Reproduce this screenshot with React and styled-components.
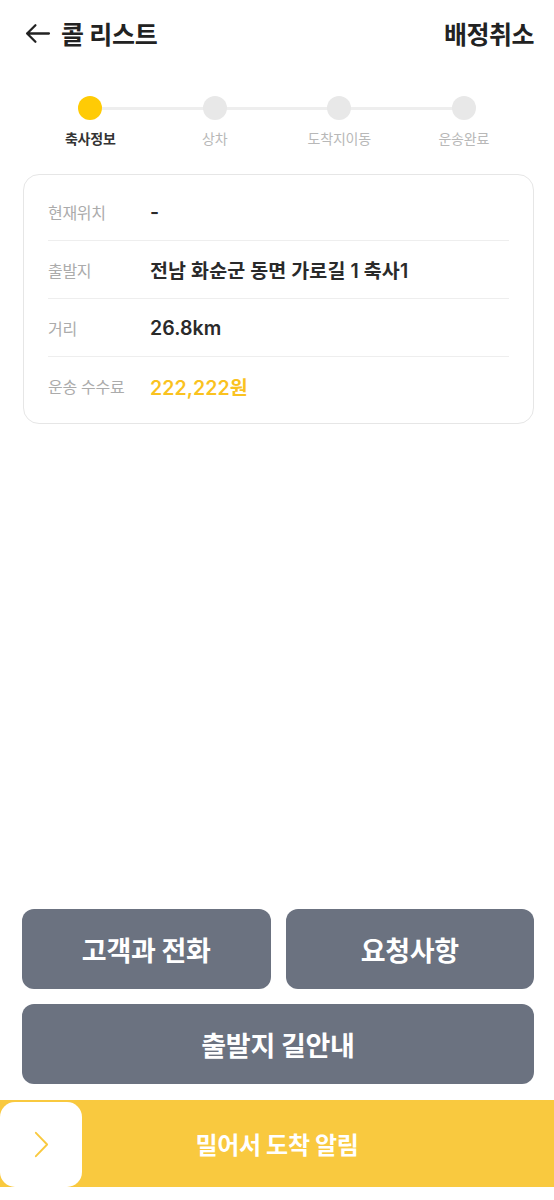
import React from 'react';
import { styled, createGlobalStyle } from 'styled-components';

const colors = {
  text: '#222222',
  value: '#2a2a2a',
  label: '#ababab',
  line: '#eeeeee',
  yellow: '#f9c93f',
  dot: '#ffcb05',
  fee: '#fac21f',
  button: '#6b7280',
};

const steps = ['축사정보', '상차', '도착지이동', '운송완료'];

const infoRows = [
  { label: '현재위치', value: '-' },
  { label: '출발지', value: '전남 화순군 동면 가로길 1 축사1' },
  { label: '거리', value: '26.8km' },
  { label: '운송 수수료', value: '222,222원', highlight: true },
];

const GlobalStyle = createGlobalStyle`
  html, body {
    margin: 0;
    padding: 0;
    background: #ffffff;
  }
  * {
    box-sizing: border-box;
  }
  body {
    font-family: Inter, 'Noto Sans CJK KR', 'Noto Sans', sans-serif;
    color: ${colors.text};
  }
`;

const App = () => {
  return (
    <Page>
      <GlobalStyle />
      <Header>
        <BackTitle>
          <BackArrow viewBox="0 0 26 24">
            <path d="M24 12H3M11 4l-8 8 8 8" />
          </BackArrow>
          <Title>콜 리스트</Title>
        </BackTitle>
        <HeaderAction>배정취소</HeaderAction>
      </Header>

      <Stepper>
        <StepLine />
        {steps.map((step, i) => (
          <Step key={step}>
            <Dot active={i === 0} />
            <StepLabel active={i === 0}>{step}</StepLabel>
          </Step>
        ))}
      </Stepper>

      <InfoCard>
        {infoRows.map((row) => (
          <InfoRow key={row.label}>
            <InfoLabel>{row.label}</InfoLabel>
            <InfoValue highlight={row.highlight}>{row.value}</InfoValue>
          </InfoRow>
        ))}
      </InfoCard>

      <Spacer />

      <ButtonGrid>
        <ActionButton>고객과 전화</ActionButton>
        <ActionButton>요청사항</ActionButton>
        <ActionButton wide>출발지 길안내</ActionButton>
      </ButtonGrid>

      <SlideBar>
        <SlideKnob>
          <Chevron viewBox="0 0 16 28">
            <path d="M2 1.5l12 12.5-12 12.5" />
          </Chevron>
        </SlideKnob>
        <SlideText>밀어서 도착 알림</SlideText>
      </SlideBar>
    </Page>
  );
};

const Page = styled.div`
  display: flex;
  flex-direction: column;
  min-height: 100vh;
  padding-bottom: 13px;
`;

const Header = styled.header`
  display: flex;
  align-items: center;
  justify-content: space-between;
  height: 66px;
  padding: 0 20px 0 24px;
`;

const BackTitle = styled.div`
  display: flex;
  align-items: center;
  gap: 10px;
`;

const BackArrow = styled.svg`
  width: 27px;
  height: 25px;
  fill: none;
  stroke: #222222;
  stroke-width: 2.2;
  stroke-linecap: round;
  stroke-linejoin: round;
`;

const Title = styled.h1`
  margin: 0;
  font-size: 25px;
  font-weight: 700;
  letter-spacing: -0.3px;
`;

const HeaderAction = styled.button`
  border: none;
  background: none;
  padding: 0;
  font-family: inherit;
  font-size: 25px;
  font-weight: 700;
  color: ${colors.text};
  letter-spacing: -0.5px;
`;

const Stepper = styled.div`
  position: relative;
  display: grid;
  grid-template-columns: repeat(4, 1fr);
  margin: 28px 28px 0;
`;

const StepLine = styled.div`
  position: absolute;
  top: 13px;
  left: 12.5%;
  right: 12.5%;
  height: 3px;
  background: ${colors.line};
`;

const Step = styled.div`
  position: relative;
  display: flex;
  flex-direction: column;
  align-items: center;
`;

const Dot = styled.span`
  width: 24px;
  height: 24px;
  border-radius: 50%;
  background: ${({ active }) => (active ? colors.dot : '#e8e8e8')};
  margin-top: 2px;
`;

const StepLabel = styled.span`
  margin-top: 8px;
  font-size: 14px;
  font-weight: ${({ active }) => (active ? 700 : 400)};
  color: ${({ active }) => (active ? '#333333' : '#b8b8b8')};
  letter-spacing: -0.2px;
`;

const InfoCard = styled.section`
  margin: 26px 20px 0 23px;
  padding: 8px 24px;
  border: 1px solid #e6e6e6;
  border-radius: 16px;
`;

const InfoRow = styled.div`
  display: flex;
  align-items: center;
  height: 58px;
  border-bottom: 1px solid #eeeeee;

  &:last-child {
    border-bottom: none;
  }
`;

const InfoLabel = styled.span`
  width: 102px;
  flex-shrink: 0;
  font-size: 16px;
  color: ${colors.label};
  letter-spacing: -0.3px;
`;

const InfoValue = styled.span`
  font-size: 19.5px;
  font-weight: 600;
  color: ${({ highlight }) => (highlight ? colors.fee : colors.value)};
  letter-spacing: 0.1px;
`;

const Spacer = styled.div`
  flex: 1;
`;

const ButtonGrid = styled.div`
  display: grid;
  grid-template-columns: 1fr 1fr;
  gap: 15px;
  padding: 0 20px 0 22px;
`;

const ActionButton = styled.button`
  grid-column: ${({ wide }) => (wide ? '1 / -1' : 'auto')};
  height: 80px;
  border: none;
  border-radius: 12px;
  background: ${colors.button};
  color: #ffffff;
  font-family: inherit;
  font-size: 27px;
  font-weight: 700;
  letter-spacing: -0.3px;
`;

const SlideBar = styled.div`
  position: relative;
  display: flex;
  align-items: center;
  justify-content: center;
  height: 87px;
  margin-top: 16px;
  background: ${colors.yellow};
`;

const SlideKnob = styled.div`
  position: absolute;
  left: 0;
  top: 2px;
  bottom: 0;
  width: 82px;
  display: flex;
  align-items: center;
  justify-content: center;
  background: #ffffff;
  border-radius: 15px;
`;

const Chevron = styled.svg`
  width: 15px;
  height: 27px;
  fill: none;
  stroke: ${colors.yellow};
  stroke-width: 2;
  stroke-linecap: round;
  stroke-linejoin: round;
`;

const SlideText = styled.span`
  font-size: 24px;
  font-weight: 700;
  color: #ffffff;
  letter-spacing: -0.3px;
`;

export default App;
